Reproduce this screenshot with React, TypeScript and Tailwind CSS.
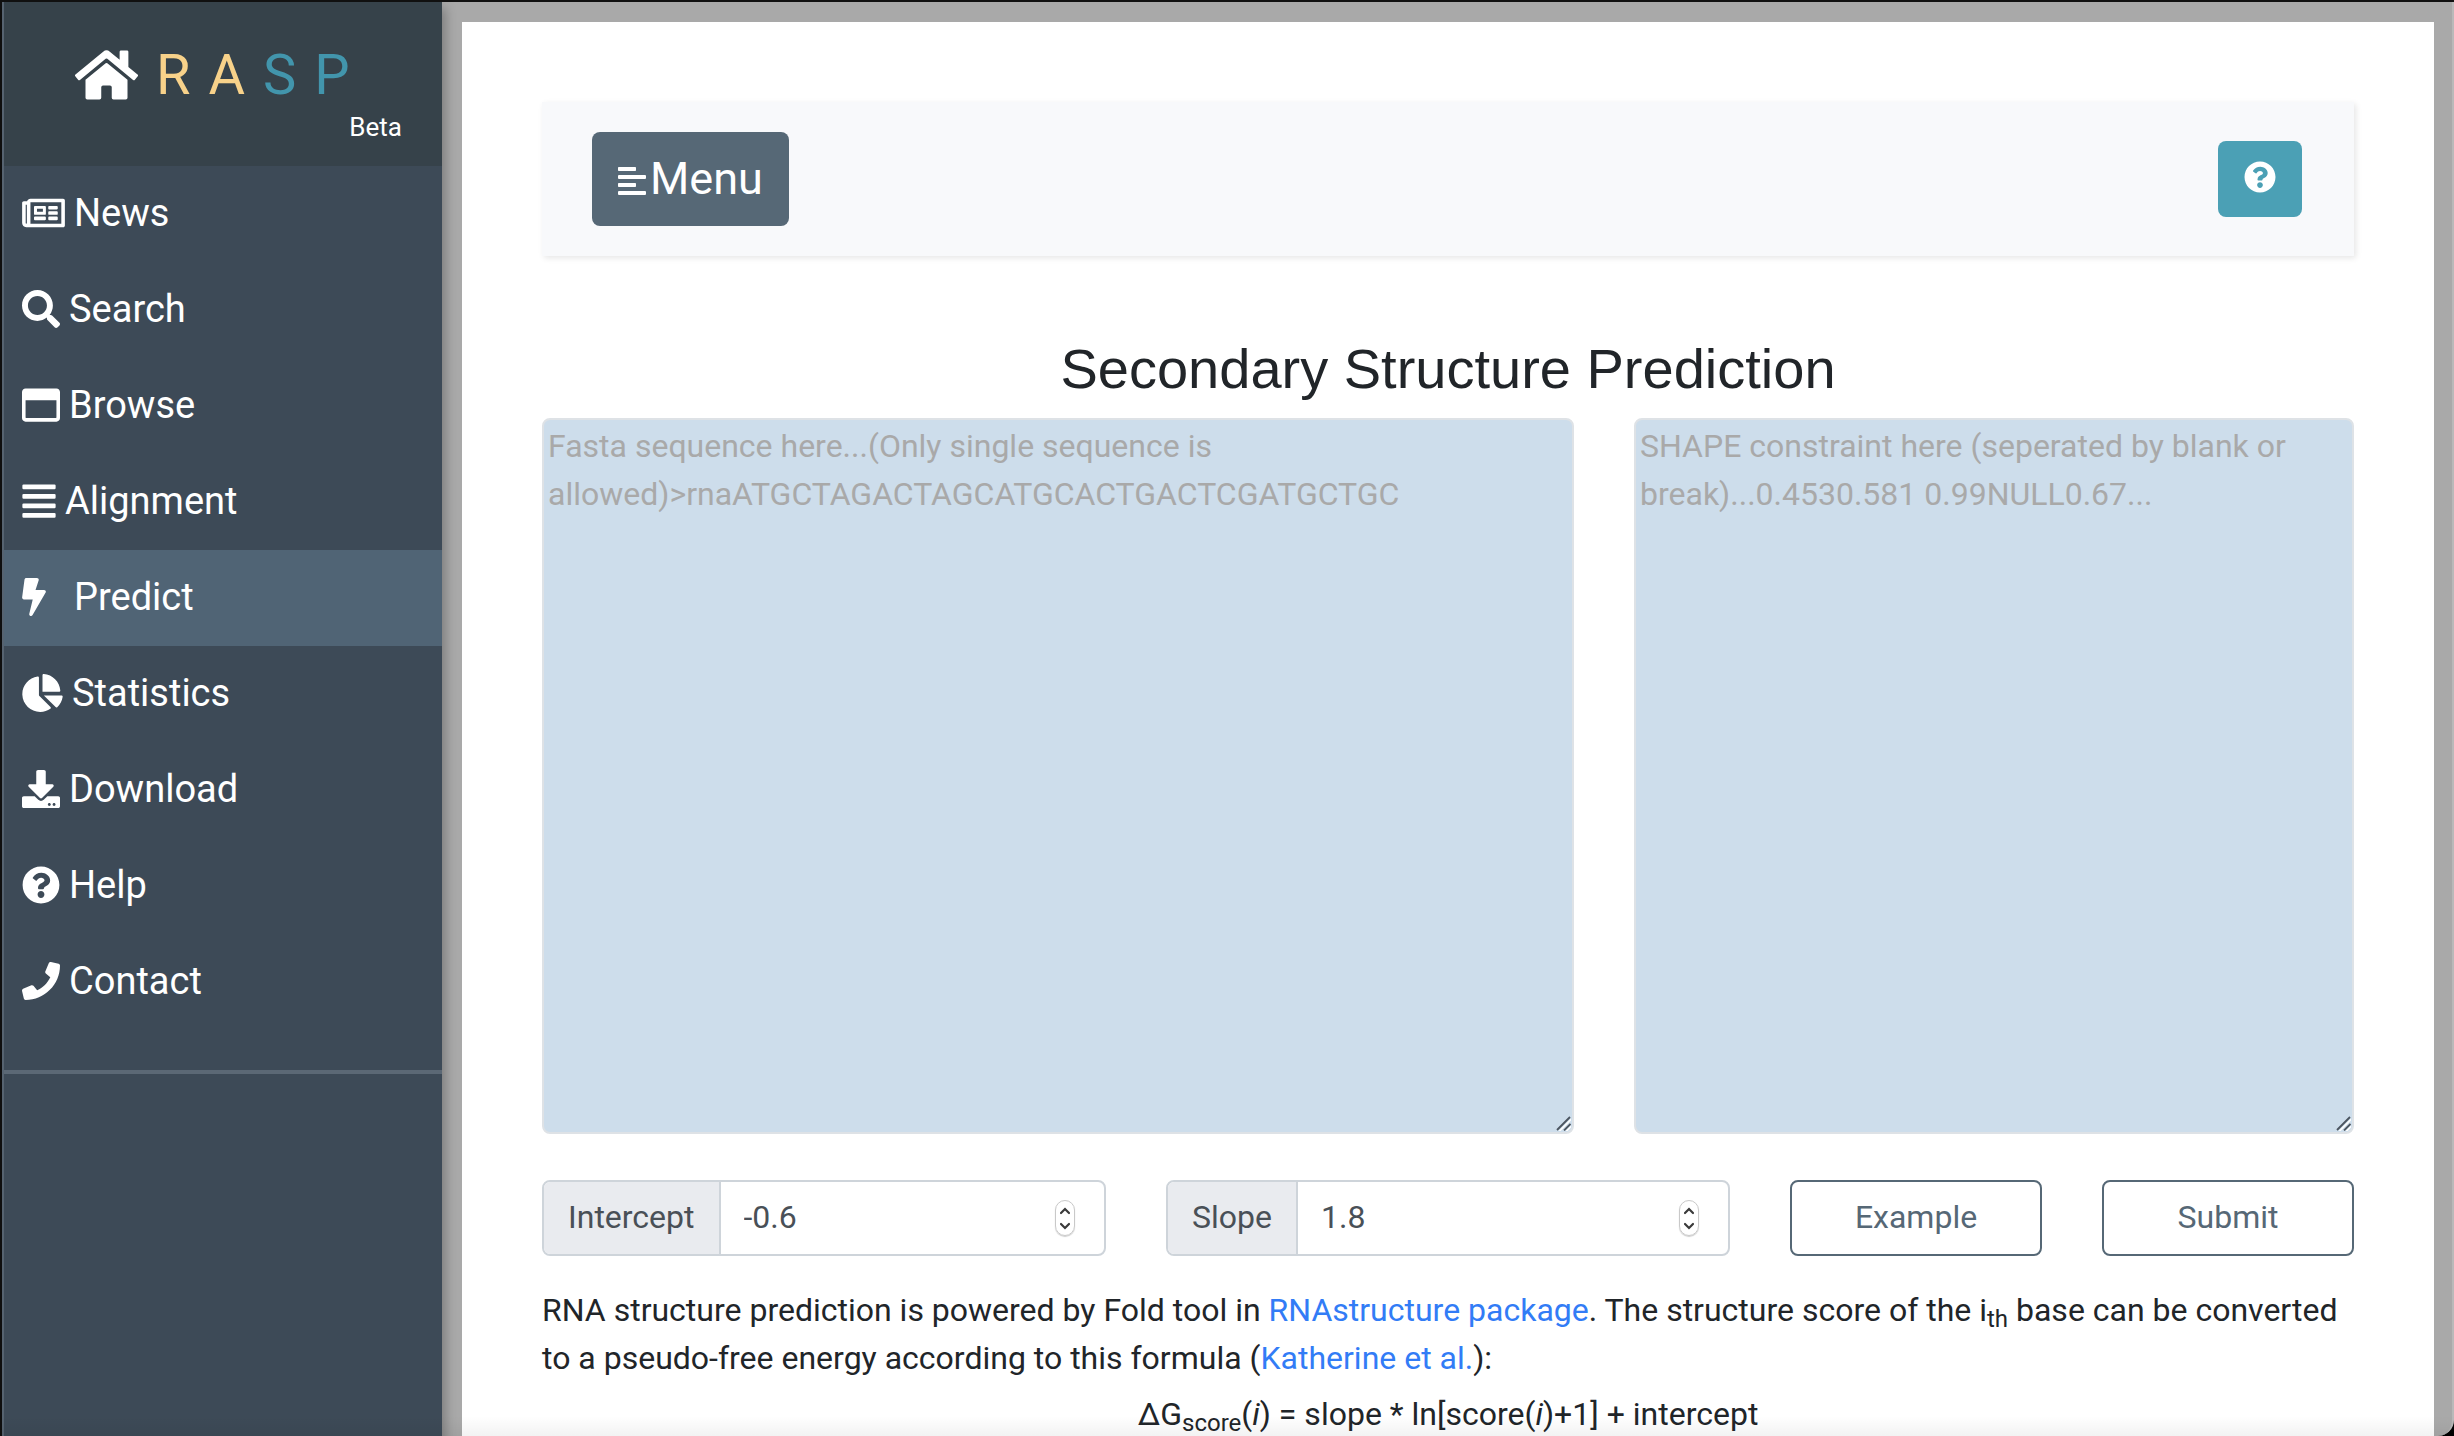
import type { ReactNode } from "react";
import type { IconType } from "react-icons";
import {
  FaAlignJustify,
  FaAlignLeft,
  FaBolt,
  FaChartPie,
  FaDownload,
  FaHome,
  FaPhone,
  FaQuestionCircle,
  FaRegNewspaper,
  FaRegWindowMaximize,
  FaSearch,
} from "react-icons/fa";

type NavItem = { label: string; icon: IconType; size: string; active?: boolean };

const items: NavItem[] = [
  { label: "News", icon: FaRegNewspaper, size: "h-[38px] w-[43px]" },
  { label: "Search", icon: FaSearch, size: "size-[38px]" },
  { label: "Browse", icon: FaRegWindowMaximize, size: "size-[38px]" },
  { label: "Alignment", icon: FaAlignJustify, size: "h-[38px] w-[34px]" },
  { label: "Predict", icon: FaBolt, size: "h-[38px] w-6", active: true },
  { label: "Statistics", icon: FaChartPie, size: "h-[38px] w-[41px]" },
  { label: "Download", icon: FaDownload, size: "size-[38px]" },
  { label: "Help", icon: FaQuestionCircle, size: "size-[38px]" },
  { label: "Contact", icon: FaPhone, size: "size-[38px]" },
];

function Sidebar() {
  return (
    <aside className="z-10 w-[440px] shrink-0 border-l-2 border-[#566370] bg-[#3d4a57] text-white shadow-[2px_8px_10px_2px_rgba(0,0,0,0.25)]">
      <div className="h-[164px] bg-[#36424a] pt-10">
        <a href="#home" className="flex items-center gap-[18px] pl-[71px] text-[56px] leading-[66px]">
          <FaHome className="h-14 w-[63px]" />
          <span className="text-[#f8d28a]">R</span>
          <span className="text-[#f8d28a]">A</span>
          <span className="text-[#4295ac]">S</span>
          <span className="text-[#4295ac]">P</span>
        </a>
        <p className="pr-10 text-right text-[26px] leading-[38px]">Beta</p>
      </div>
      <nav className="border-b-4 border-[#5b6875] pb-10">
        <ul>
          {items.map(({ label, icon: Icon, size, active }) => (
            <li key={label}>
              <a
                href={"#" + label.toLowerCase()}
                className={
                  active
                    ? "flex h-24 items-center gap-7 bg-[#506475] pb-[2px] pl-[18px] text-[38px]"
                    : "flex h-24 items-center gap-[9px] pb-[2px] pl-[18px] text-[38px]"
                }
              >
                <Icon className={size} />
                {label}
              </a>
            </li>
          ))}
        </ul>
      </nav>
    </aside>
  );
}

function SequenceArea({ label, placeholder, span }: { label: string; placeholder: string; span: string }) {
  return (
    <div className={"relative " + span}>
      <textarea
        aria-label={label}
        placeholder={placeholder}
        className="block h-[716px] w-full resize-none overflow-hidden rounded-lg border-2 border-[#dee2e6] bg-[#cdddeb] px-1 py-[2px] leading-[48px] placeholder:text-[#a9a9a9]"
      />
      <svg viewBox="0 0 15 15" className="pointer-events-none absolute right-[3px] bottom-[3px] size-[15px]" fill="none">
        <path d="M3 15.5 15.5 3M10 15.5 15.5 10" stroke="#ffffff" strokeWidth="1.5" />
        <path d="M1 14 14 1M8 14.5 14.5 8" stroke="#4b5560" strokeWidth="1.8" />
      </svg>
    </div>
  );
}

function NumberField({ id, label, value }: { id: string; label: string; value: string }) {
  return (
    <div className="col-span-4 flex h-[76px] overflow-hidden rounded-lg border-2 border-[#ced4da] text-[#495057]">
      <label htmlFor={id} className="flex items-center border-r-2 border-[#ced4da] bg-[#e9ebef] px-6 pb-[2px]">
        {label}
      </label>
      <input
        id={id}
        type="number"
        step="0.1"
        defaultValue={value}
        className="min-w-0 flex-1 pb-[2px] pl-[23px] [appearance:textfield] [&::-webkit-inner-spin-button]:appearance-none"
      />
      <div className="mr-[29px] flex h-9 w-5 flex-col self-center rounded-full border border-[#c9c9c9] shadow-[0_1px_1px_rgba(0,0,0,0.2)]">
        <SpinButton label={"Increase " + label}>
          <path d="M5 12 9 8l4 4" />
        </SpinButton>
        <SpinButton label={"Decrease " + label}>
          <path d="M5 6l4 4 4-4" />
        </SpinButton>
      </div>
    </div>
  );
}

function SpinButton({ label, children }: { label: string; children: ReactNode }) {
  return (
    <button type="button" aria-label={label} className="flex-1">
      <svg viewBox="0 0 18 17" className="w-full" fill="none" stroke="#3a3a3a" strokeWidth="2.2" strokeLinecap="round">
        {children}
      </svg>
    </button>
  );
}

function OutlineButton({ children }: { children: ReactNode }) {
  return (
    <button
      type="button"
      className="col-span-2 h-[76px] rounded-lg border-2 border-[#566876] pb-[2px] text-[#566876]"
    >
      {children}
    </button>
  );
}

export default function App() {
  return (
    <div className="relative h-screen overflow-hidden bg-black font-['Roboto',sans-serif] text-[32px] leading-[48px] text-[#212529]">
      <div className="flex h-full border-t-2 border-l-2 border-[#111111]">
        <Sidebar />
        <div className="min-w-0 flex-1 overflow-hidden rounded-br-2xl border-r-2 border-[#b9b9b9] bg-[#a9a9a9] pt-5 pr-[18px] pl-5">
          <main className="min-h-full bg-white p-20">
            <header className="flex h-[154px] items-center justify-between bg-[#f8f9fb] pr-[52px] pl-[50px] shadow-[2px_2px_6px_rgba(0,0,0,0.1)]">
              <button
                type="button"
                className="flex h-[94px] items-center gap-1 rounded-lg bg-[#566876] px-[26px] text-[45px] text-white"
              >
                <FaAlignLeft className="mt-1 h-8 w-7" />
                Menu
              </button>
              <button
                type="button"
                aria-label="Help"
                className="flex h-[76px] w-[84px] items-center justify-center rounded-lg bg-[#4ba0b5] pb-1 text-white"
              >
                <FaQuestionCircle className="size-8" />
              </button>
            </header>

            <h1 className="mt-20 mb-4 text-center font-['Liberation_Sans',sans-serif] text-[56px] leading-[66px]">
              Secondary Structure Prediction
            </h1>

            <form className="grid grid-cols-12 gap-x-[60px] gap-y-[46px]">
              <SequenceArea
                label="Sequence"
                span="col-span-7"
                placeholder="Fasta sequence here...(Only single sequence is allowed)>rnaATGCTAGACTAGCATGCACTGACTCGATGCTGC"
              />
              <SequenceArea
                label="SHAPE constraint"
                span="col-span-5"
                placeholder="SHAPE constraint here (seperated by blank or break)...0.4530.581 0.99NULL0.67..."
              />
              <NumberField id="intercept" label="Intercept" value="-0.6" />
              <NumberField id="slope" label="Slope" value="1.8" />
              <OutlineButton>Example</OutlineButton>
              <OutlineButton>Submit</OutlineButton>
            </form>

            <p className="mt-[30px]">
              RNA structure prediction is powered by Fold tool in{" "}
              <a href="#rnastructure" className="text-[#327cf6]">
                RNAstructure package
              </a>
              . The structure score of the i<sub>th</sub> base can be converted to a pseudo-free energy according to
              this formula (
              <a href="#katherine" className="text-[#327cf6]">
                Katherine et al.
              </a>
              ):
            </p>
            <p className="mt-2 text-center">
              ΔG<sub>score</sub>(<i>i</i>) = slope * ln[score(<i>i</i>)+1] + intercept
            </p>
          </main>
        </div>
      </div>
      <div className="pointer-events-none absolute inset-x-0 bottom-0 z-20 h-5 bg-linear-to-b from-transparent to-black/5" />
    </div>
  );
}
